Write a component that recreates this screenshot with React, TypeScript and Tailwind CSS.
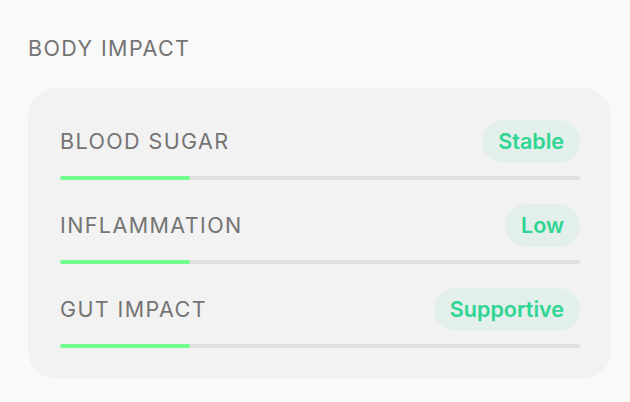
const ROWS = [
  { label: 'BLOOD SUGAR', status: 'Stable', level: 25 },
  { label: 'INFLAMMATION', status: 'Low', level: 25 },
  { label: 'GUT IMPACT', status: 'Supportive', level: 25 },
]

export default function App() {
  return (
    <div className="min-h-[402px] w-[630px] bg-[#f9f9f9] px-7 pt-[34px] font-['Inter',sans-serif]">
      <h2 className="text-[21.5px] leading-7 font-normal tracking-[0.065em] text-[#747474]">
        BODY IMPACT
      </h2>
      <div className="mt-[26px] w-[583px] rounded-[28px] bg-[#f2f2f2] pt-8 pr-[31px] pb-[31px] pl-8">
        <div className="flex flex-col gap-6">
          {ROWS.map((row) => (
            <div key={row.label}>
              <div className="flex items-center justify-between">
                <span className="text-[21.5px] font-normal tracking-[0.065em] text-[#747474]">
                  {row.label}
                </span>
                <span className="flex h-[43px] items-center rounded-full bg-[#e2efea] px-4 text-[21.5px] font-semibold text-[#2fd592]">
                  {row.status}
                </span>
              </div>
              <div className="mt-[13px] h-1 w-full rounded-full bg-[#e0e0e0]">
                <div
                  className="h-1 rounded-full bg-[#6fff90]"
                  style={{ width: `${row.level}%` }}
                />
              </div>
            </div>
          ))}
        </div>
      </div>
    </div>
  )
}
